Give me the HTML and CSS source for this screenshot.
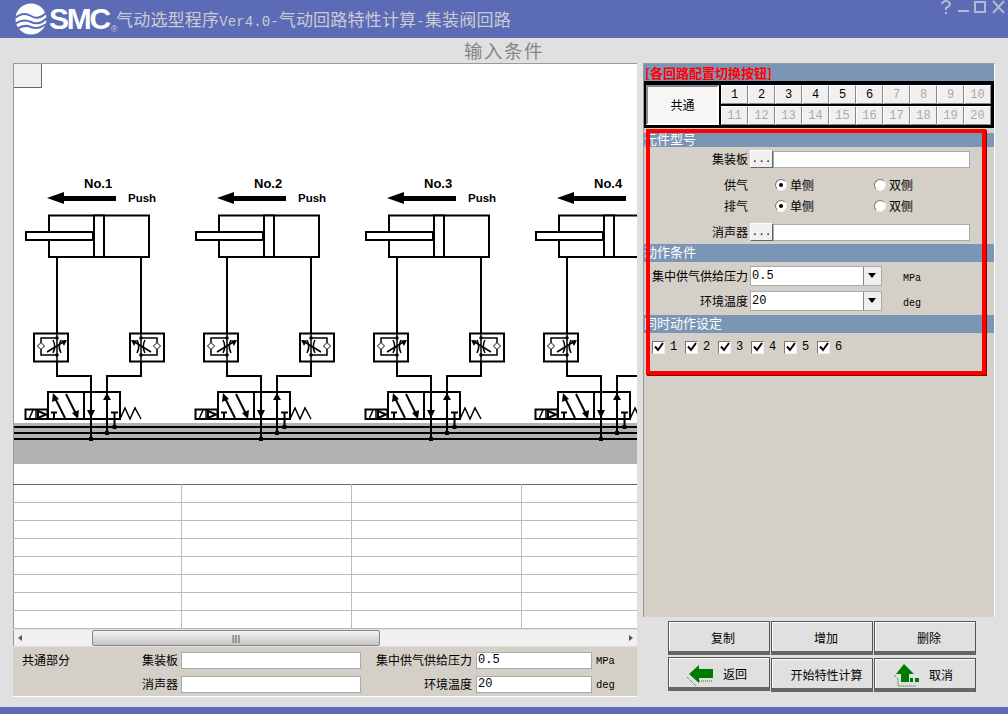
FILE: index.html
```html
<!DOCTYPE html>
<html lang="zh">
<head>
<meta charset="utf-8">
<title>气动选型程序</title>
<link rel="stylesheet" href="styles.css">
</head>
<body>
<svg class="defs" width="0" height="0" aria-hidden="true">
  <defs>
    <g id="flow">
      <rect x="34" y="333.500" width="34" height="28" fill="#fff" stroke="#000" stroke-width="2"/>
      <path d="M57 338H41V343M41 349V355H57M57 332V363M47 352L65 341" fill="none" stroke="#000" stroke-width="1.500"/>
      <path d="M41 342.500L44.500 346L41 349.500L37.500 346Z" fill="#fff" stroke="#000"/>
      <path d="M53 340Q56.500 346.500 53 353M61 340Q57.500 346.500 61 353" fill="none" stroke="#000" stroke-width="1.500"/>
      <path d="M67 340L61 340.500L64 346Z"/>
      <circle cx="57" cy="338" r="1.800"/><circle cx="57" cy="355" r="1.800"/>
    </g>
    <g id="body">
      <path d="M47 198L64 192V196H116V201H64V204Z"/>
      <rect x="49" y="215.500" width="100" height="41.500" fill="#fff" stroke="#000" stroke-width="2"/>
      <rect x="94" y="215.500" width="10" height="41.500" fill="#fff" stroke="#000" stroke-width="2"/>
      <rect x="26" y="232" width="67" height="8" fill="#fff" stroke="#000" stroke-width="2"/>
      <path d="M57 257V376H91V439M141 257V376H107V433" fill="none" stroke="#000" stroke-width="2"/>
      <use href="#flow"/>
      <use href="#flow" transform="translate(198 0) scale(-1 1)"/>
      <rect x="48" y="392" width="72" height="27" fill="none" stroke="#000" stroke-width="2"/>
      <path d="M84 392V419M54 396L65 418M66 394L77 416" fill="none" stroke="#000" stroke-width="2"/>
      <path d="M53 393L59 399L52 402ZM78 419L72 413L79 410ZM87 410H95L91 418ZM103 400H111L107 393Z"/>
      <path d="M51 412.500H57M54 412.500V419M111 412.500H118M114.500 412.500V427" fill="none" stroke="#000" stroke-width="2"/>
      <path d="M120 419L125 408L130 419L135 408L141 419" fill="none" stroke="#000" stroke-width="1.500"/>
      <rect x="25.500" y="409.500" width="22" height="9.500" fill="#fff" stroke="#000" stroke-width="2"/>
      <path d="M33 410L29.500 418M36 409V419" fill="none" stroke="#000" stroke-width="1.500"/>
      <path d="M38 411L46 414.500L38 418Z" fill="none" stroke="#000" stroke-width="2"/>
      <rect x="112.500" y="425" width="4" height="4"/>
      <rect x="105" y="431" width="4" height="4"/>
      <rect x="89" y="437" width="4" height="4"/>
    </g>
    <path id="tick" d="M2 5.500L5 9L10 2" fill="none" stroke="#000" stroke-width="2"/>
  </defs>
</svg>

<header class="topbar">
  <svg class="logo-mark" viewBox="0 0 32 32" aria-hidden="true">
    <circle cx="16" cy="16" r="15.500" fill="#fff"/>
    <path d="M0 15Q8 8 16 13T32 9M0 21Q8 15 16 19T32 15M2 26Q9 21 16 24T31 21" fill="none" stroke="#5c6bb6" stroke-width="2"/>
  </svg>
  <span class="logo-text">SMC</span>
  <span class="logo-r">®</span>
  <h1 class="app-title">气动选型程序<span class="ver">Ver4.0-</span>气动回路特性计算<span class="ver">-</span>集装阀回路</h1>
  <svg class="winctl" width="66" height="14" viewBox="0 0 66 14" aria-hidden="true">
    <path d="M2 4Q3 1 6 1T10 4Q10 6 6 8V10M6 12V14" fill="none" stroke="#b4b8d0" stroke-width="2"/>
    <path d="M18 11H29" stroke="#b4b8d0" stroke-width="2"/>
    <rect x="35" y="2" width="10" height="10" fill="none" stroke="#b4b8d0" stroke-width="2"/>
    <path d="M53 1L64 13M64 1L53 13" stroke="#b4b8d0" stroke-width="2"/>
  </svg>
</header>

<h2 class="page-title">输入条件</h2>

<main class="main">
  <section class="left">
    <div class="diagram">
      <svg class="circuit" width="623" height="420" viewBox="14 64 623 420" role="img" aria-label="回路图">
        <rect x="14" y="423" width="623" height="41" fill="#b2b2b2"/>
        <path d="M14 427H637M14 433H637M14 439H637" stroke="#000" stroke-width="2"/>
        <g>
          <text class="no" x="84" y="188">No.1</text><text class="push" x="128" y="202">Push</text>
          <use href="#body"/>
        </g>
        <g transform="translate(170 0)">
          <text class="no" x="84" y="188">No.2</text><text class="push" x="128" y="202">Push</text>
          <use href="#body"/>
        </g>
        <g transform="translate(340 0)">
          <text class="no" x="84" y="188">No.3</text><text class="push" x="128" y="202">Push</text>
          <use href="#body"/>
        </g>
        <g transform="translate(510 0)">
          <text class="no" x="84" y="188">No.4</text>
          <use href="#body"/>
        </g>
      </svg>
      <button class="corner-btn" type="button" aria-label="角"></button>
    </div>
    <table class="grid">
      <tr><td></td><td></td><td></td><td></td></tr>
      <tr><td></td><td></td><td></td><td></td></tr>
      <tr><td></td><td></td><td></td><td></td></tr>
      <tr><td></td><td></td><td></td><td></td></tr>
      <tr><td></td><td></td><td></td><td></td></tr>
      <tr><td></td><td></td><td></td><td></td></tr>
      <tr><td></td><td></td><td></td><td></td></tr>
      <tr><td></td><td></td><td></td><td></td></tr>
    </table>
    <div class="hscroll">
      <span class="arr-left"></span>
      <div class="track"><div class="thumb"><span class="grip">III</span></div></div>
      <span class="arr-right"></span>
    </div>
    <div class="common">
      <span class="c-title">共通部分</span>
      <span class="c-label c-l1">集装板</span><span class="field c-f1"></span>
      <span class="c-label c-l2">集中供气供给压力</span><span class="field c-f2">0.5</span><span class="unit">MPa</span>
      <span class="c-label c-l1">消声器</span><span class="field c-f1"></span>
      <span class="c-label c-l2">环境温度</span><span class="field c-f2">20</span><span class="unit">deg</span>
    </div>
  </section>

  <section class="right">
    <div class="panel">
      <div class="panel-head">[各回路配置切换按钮]</div>
      <div class="switcher">
        <button class="sw-common" type="button">共通</button>
        <div class="sw-nums">
          <button class="num" type="button">1</button><button class="num" type="button">2</button><button class="num" type="button">3</button><button class="num" type="button">4</button><button class="num" type="button">5</button><button class="num" type="button">6</button><button class="num off" type="button">7</button><button class="num off" type="button">8</button><button class="num off" type="button">9</button><button class="num off" type="button">10</button>
          <button class="num off" type="button">11</button><button class="num off" type="button">12</button><button class="num off" type="button">13</button><button class="num off" type="button">14</button><button class="num off" type="button">15</button><button class="num off" type="button">16</button><button class="num off" type="button">17</button><button class="num off" type="button">18</button><button class="num off" type="button">19</button><button class="num off" type="button">20</button>
        </div>
      </div>
      <div class="band band-first">元件型号</div>
      <div class="row r-pick"><span class="lbl">集装板</span><button class="dots" type="button">...</button><span class="field f-long"></span></div>
      <div class="row r-radio"><span class="lbl lbl-r">供气</span><span class="radio on"></span><span class="opt">单侧</span><span class="radio"></span><span class="opt">双侧</span></div>
      <div class="row r-radio r-radio2"><span class="lbl lbl-r">排气</span><span class="radio on"></span><span class="opt">单侧</span><span class="radio"></span><span class="opt">双侧</span></div>
      <div class="row r-pick r-pick2"><span class="lbl">消声器</span><button class="dots" type="button">...</button><span class="field f-long"></span></div>
      <div class="band">动作条件</div>
      <div class="row r-combo"><span class="lbl">集中供气供给压力</span><span class="combo"><span class="combo-val">0.5</span><span class="combo-btn"></span></span><span class="unit-r">MPa</span></div>
      <div class="row r-combo r-combo2"><span class="lbl">环境温度</span><span class="combo"><span class="combo-val">20</span><span class="combo-btn"></span></span><span class="unit-r">deg</span></div>
      <div class="band band-sync">同时动作设定</div>
      <div class="checks">
        <span class="chk"><svg width="12" height="12" viewBox="0 0 12 12"><use href="#tick"/></svg></span><span class="chk-l">1</span>
        <span class="chk"><svg width="12" height="12" viewBox="0 0 12 12"><use href="#tick"/></svg></span><span class="chk-l">2</span>
        <span class="chk"><svg width="12" height="12" viewBox="0 0 12 12"><use href="#tick"/></svg></span><span class="chk-l">3</span>
        <span class="chk"><svg width="12" height="12" viewBox="0 0 12 12"><use href="#tick"/></svg></span><span class="chk-l">4</span>
        <span class="chk"><svg width="12" height="12" viewBox="0 0 12 12"><use href="#tick"/></svg></span><span class="chk-l">5</span>
        <span class="chk"><svg width="12" height="12" viewBox="0 0 12 12"><use href="#tick"/></svg></span><span class="chk-l">6</span>
      </div>
      <div class="highlight"></div>
    </div>
    <div class="actions">
      <button class="act act-top" type="button">复制</button>
      <button class="act act-top" type="button">增加</button>
      <button class="act act-top" type="button">删除</button>
      <button class="act act-ret" type="button">
        <svg class="act-ico" width="26" height="22" viewBox="0 0 26 22" aria-hidden="true">
          <path d="M2 10L12 1V5H26V14H12V19Z" fill="#007a00"/>
          <path d="M0 13L9 22M12 17H26" stroke="#007a00" stroke-dasharray="1 1" fill="none"/>
        </svg><span class="act-t">返回</span>
      </button>
      <button class="act act-start" type="button">开始特性计算</button>
      <button class="act act-can" type="button">
        <svg class="act-ico" width="26" height="23" viewBox="0 0 26 23" aria-hidden="true">
          <path d="M11 0L21 10H16V18H8V10H3Z" fill="#007a00"/>
          <path d="M17 14H20V18H17ZM22 14H26V18H22Z" fill="#007a00"/>
          <path d="M1 11L5 15V22H23" stroke="#007a00" stroke-dasharray="1 1" fill="none"/>
        </svg><span class="act-t">取消</span>
      </button>
    </div>
  </section>
</main>
<footer class="bottombar"></footer>
</body>
</html>
```
FILE: styles.css
```css
* { box-sizing: border-box; }
html, body { margin: 0; padding: 0; }
body {
  width: 1008px; height: 714px; overflow: hidden;
  display: flex; flex-direction: column;
  background: #e0e0e0; color: #000;
  font: 12px/1.2 "Noto Sans CJK SC", "Liberation Sans", sans-serif;
}
.defs { position: absolute; }
button { font: inherit; color: inherit; padding: 0; cursor: default; }

.topbar {
  height: 38px; flex: none; background: #5c6bb6;
  display: flex; align-items: center; padding-left: 16px; position: relative;
}
.logo-mark { width: 32px; height: 32px; flex: none; margin-left: -1px; }
.logo-text {
  font: bold 30px/1 "Liberation Sans", sans-serif; color: #fff;
  letter-spacing: -2.2px; margin-left: 2px; width: 59px; flex: none;
}
.logo-r { font: 9px/1 "Liberation Sans", sans-serif; color: #c4c8e0; align-self: flex-end; margin: 0 0 4px 3px; width: 8px; }
.app-title {
  margin: 0 0 0 -3px; font: normal 17px/1 "Noto Sans CJK SC", sans-serif; color: #c9cbd3; white-space: nowrap;
  letter-spacing: 0.2px;
}
.ver { font: 14px/1 "Liberation Mono", monospace; letter-spacing: 0.1px; }
.winctl { position: absolute; right: 2px; top: 0; }

.page-title {
  height: 25px; flex: none; margin: 0; text-align: center;
  font: normal 18.500px/25px "Noto Sans CJK SC", sans-serif; color: #858585;
  letter-spacing: 1.500px;
}

.main { flex: 1; display: flex; padding-left: 13px; min-height: 0; }
.left { width: 624px; flex: none; }
.diagram {
  height: 421px; background: #fff; position: relative; overflow: hidden;
  border-top: 1px solid #999; border-left: 1px solid #999;
}
.circuit { display: block; font-family: "Liberation Sans", sans-serif; font-weight: bold; }
.no { font-size: 13px; }
.push { font-size: 11.500px; }
.corner-btn {
  position: absolute; left: 0; top: 0; width: 28px; height: 24px;
  background: #f0f0f0; border: 0; border-right: 1px solid #666; border-bottom: 1px solid #666;
}

.grid {
  width: 624px; border-collapse: collapse; table-layout: fixed; background: #fff;
  border-top: 1px solid #666; border-left: 1px solid #999;
}
.grid td { height: 18px; padding: 0; border-right: 1px solid #bbb; border-bottom: 1px solid #bbb; }
.grid td:nth-child(1) { width: 168px; }
.grid td:nth-child(2), .grid td:nth-child(3) { width: 170px; }
.grid td:last-child { border-right: 0; }

.hscroll {
  height: 16px; margin-top: 1px; background: #f0f0f0; display: flex; align-items: center;
  border-left: 1px solid #999;
}
.arr-left, .arr-right { width: 0; height: 0; flex: none; border: 3px solid transparent; }
.arr-left { border-right: 4px solid #555; margin-left: 1px; }
.arr-right { border-left: 4px solid #555; margin-right: 1px; margin-left: auto; }
.track { width: 288px; flex: none; margin-left: 70px; }
.thumb {
  height: 16px; border: 1px solid #888; border-radius: 2px;
  background: linear-gradient(#f4f4f4, #c4c4c4); text-align: center;
}
.grip { font: 10px/14px "Liberation Sans", sans-serif; color: #555; }

.common {
  height: 50px; margin-top: 1px; background: #d4d0c8; border-bottom: 1px solid #fff;
  display: grid; grid-template-columns: 95px 73px 180px 115px 118px 1fr;
  grid-template-rows: 17px 17px; row-gap: 7px; padding: 5px 0 0 0;
  align-items: center;
}
.c-title { padding-left: 9px; }
.common > :nth-child(7) { grid-column: 2; }
.c-label { text-align: right; padding-right: 3px; }
.c-l2 { padding-right: 4px; }
.field { display: block; background: #fff; border: 1px solid #aaa; font: 12px/15px "Liberation Mono", monospace; padding-left: 1px; }
.c-f1 { width: 180px; height: 17px; }
.c-f2 { width: 116px; height: 17px; }
.unit { font: 10.500px "Liberation Mono", monospace; padding-left: 2px; }

.right { margin-left: 6px; width: 352px; flex: none; }
.panel {
  position: relative; height: 554px; background: #d4d0c8;
  border-top: 1px solid #999; border-left: 1px solid #999; border-right: 1px solid #fff;
}
.panel-head {
  height: 17px; background: #7b96b5; color: #f00; font-weight: bold; font-size: 13px; line-height: 17px; padding-left: 1px;
}
.switcher {
  height: 47px; background: #000; display: flex; gap: 2px; padding: 4px 2px 3px 2px;
}
.sw-common {
  width: 73px; height: 40px; flex: none; background: #f6f6f6; font-size: 12px;
  border: 2px solid; border-color: #888 #fff #fff #888;
}
.sw-nums { display: grid; grid-template-columns: repeat(10, 27px); grid-template-rows: 19px 19px; gap: 2px 0; }
.num {
  background: #f0f0f0; font: 12px/1 "Liberation Mono", monospace; width: 27px; height: 19px;
  border: 1px solid; border-color: #fff #888 #888 #fff;
}
.off { color: #aaa; }

.band {
  height: 18px; background: #7b96b5; color: #fff; font-size: 13px; line-height: 16px; white-space: nowrap;
}
.band-first { margin-top: 5px; height: 14px; line-height: 11px; }
.band-sync { margin-top: 4px; }

.row { display: flex; align-items: center; }
.lbl { width: 104px; flex: none; text-align: right; }
.r-pick { height: 18px; margin-top: 3px; }
.r-pick2 { margin-top: 8px; margin-bottom: 3px; }
.dots {
  width: 23px; height: 18px; margin-left: 2px; background: #f0f0f0; font: 11px/1 "Liberation Mono", monospace;
  border: 1px solid; border-color: #fff #666 #666 #fff; flex: none;
}
.f-long { width: 197px; height: 17px; }
.r-radio { height: 18px; margin-top: 8px; }
.r-radio2 { margin-top: 3px; }
.radio {
  width: 12px; height: 12px; border-radius: 50%; background: #fff; flex: none; position: relative;
  border: 1px solid; border-color: #777 #eee #eee #777; margin-left: 27px;
}
.radio.on::after {
  content: ""; position: absolute; left: 3px; top: 3px; width: 4px; height: 4px; border-radius: 50%; background: #000;
}
.radio:not(.on) { margin-left: 58px; }
.opt { margin-left: 3px; width: 26px; }

.r-combo { height: 20px; margin-top: 4px; }
.r-combo2 { margin-top: 5px; }
.combo {
  width: 132px; height: 20px; margin-left: 2px; background: #fff; display: flex; flex: none;
  border: 1px solid #aaa;
}
.combo-val { flex: 1; font: 12px/18px "Liberation Mono", monospace; padding-left: 1px; }
.combo-btn {
  width: 18px; background: #f0f0f0; border-left: 1px solid #888; position: relative;
}
.combo-btn::after {
  content: ""; position: absolute; left: 4px; top: 6px; border: 4px solid transparent; border-top: 5px solid #000; border-bottom: 0;
}
.unit-r { font: 10px "Liberation Mono", monospace; margin-left: 21px; margin-top: 4px; }

.checks { display: flex; align-items: center; height: 18px; margin-top: 5px; padding-left: 8px; }
.chk {
  width: 13px; height: 13px; flex: none; background: #fff; display: flex;
  border: 1px solid; border-color: #777 #eee #eee #777;
}
.chk svg { display: block; margin: -0.500px; }
.chk-l { width: 20px; padding-left: 5px; font: 12px/1 "Liberation Mono", monospace; }

.highlight {
  position: absolute; left: 2px; top: 65px; width: 340px; height: 246px;
  border: 4px solid #f00; box-shadow: 1px 1px 0 #900;
  pointer-events: none;
}

.actions {
  display: grid; grid-template-columns: repeat(3, 102px); grid-template-rows: 35px 35px;
  gap: 0 1px; margin: 4px 0 0 25px;
}
.act {
  width: 102px; height: 34px; background: #e0e0e0; display: flex; align-items: center; justify-content: center; gap: 10px;
  border: 1px solid #555; border-bottom: 4px solid #666; padding-top: 4px;
  box-shadow: inset 1px 1px 0 #fff;
}
.act-top { padding-left: 8px; }
.act-ret { margin-top: 1px; padding-right: 4px; }
.act-start { margin: 2px 0 0 0; padding-left: 9px; }
.act-can { margin-top: 2px; padding-right: 4px; }
.act-ico { flex: none; }
.act-t { display: block; }

.bottombar { height: 7px; flex: none; background: #5c6bb6; }
```
